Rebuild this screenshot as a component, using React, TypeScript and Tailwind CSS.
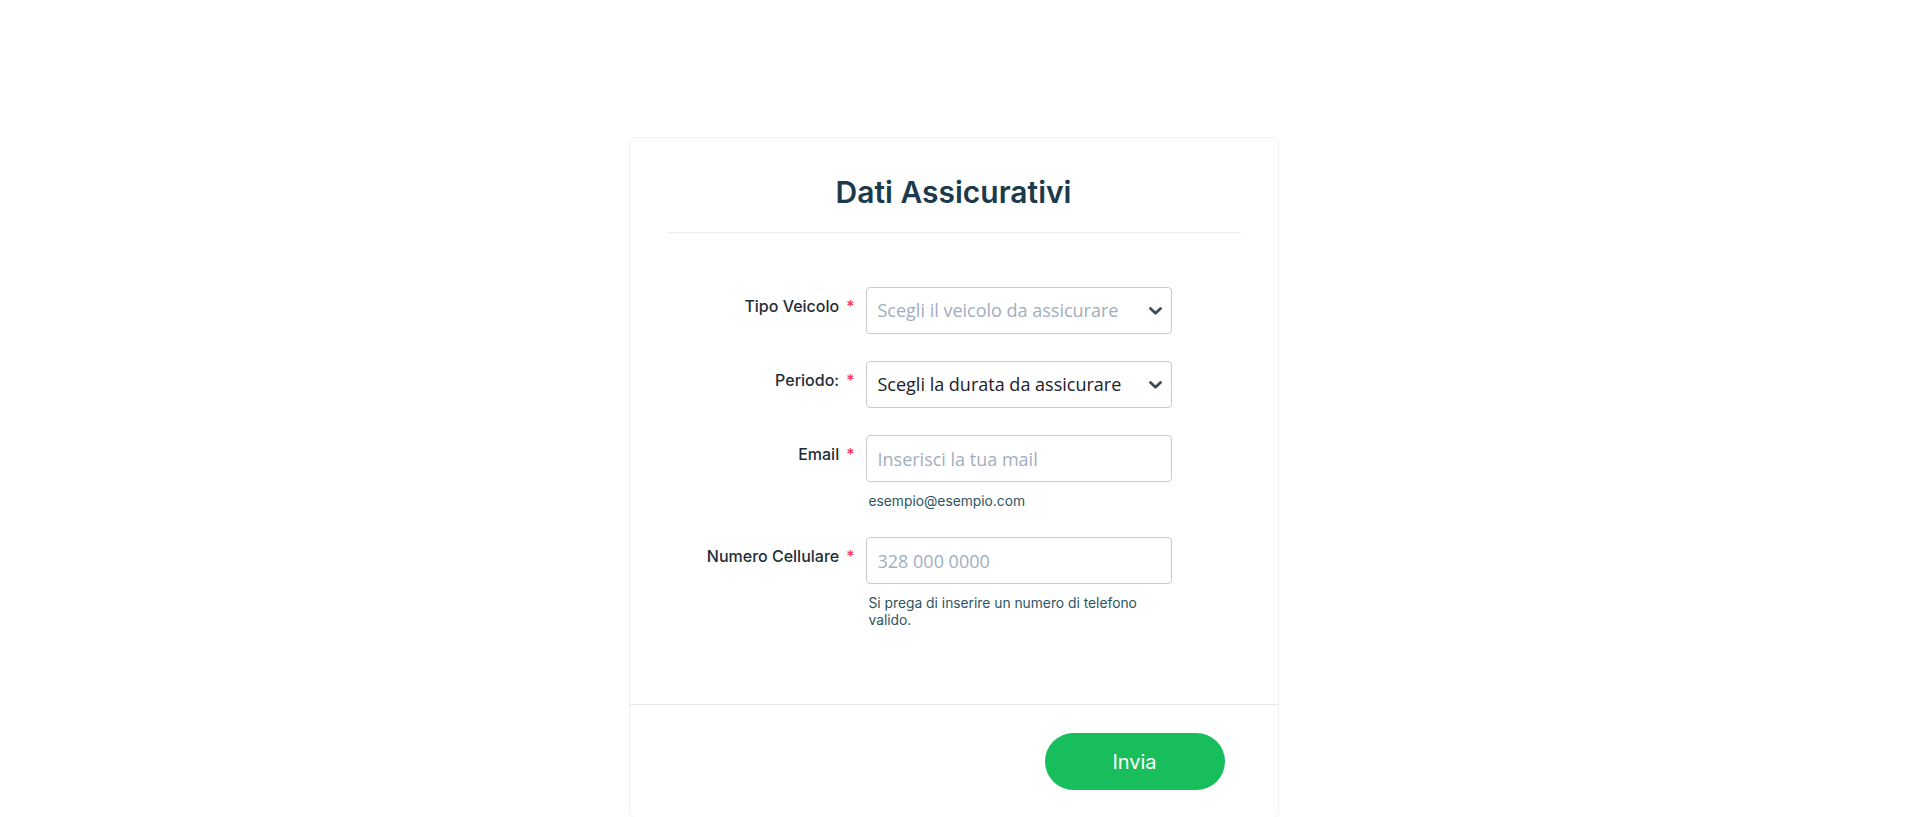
import type { ReactNode } from 'react'

const labelFont = { fontFamily: 'Inter, "Liberation Sans", sans-serif' }
const fieldFont = { fontFamily: '"Open Sans", "Noto Sans", sans-serif' }

function Chevron() {
  return (
    <svg
      width="13"
      height="8"
      viewBox="0 0 13 8"
      className="pointer-events-none absolute right-[10px] top-1/2 -translate-y-1/2"
    >
      <path
        d="M1.5 1.5 6.5 6.2l5-4.7"
        fill="none"
        stroke="#3f4a5c"
        strokeWidth="2.8"
        strokeLinecap="round"
        strokeLinejoin="round"
      />
    </svg>
  )
}

function Row({ label, children, hint }: { label: string; children: ReactNode; hint?: string }) {
  return (
    <div className="flex">
      <label
        className="w-[199px] pr-[11px] pt-[7px] text-right text-[16px] leading-6 font-medium text-[#1f2d38]"
        style={labelFont}
      >
        {label}
        <span className="ml-[7px] text-[#f0364f]">*</span>
      </label>
      <div className="w-[306px]">
        {children}
        {hint && (
          <p
            className="mt-[11px] pl-[3px] text-[13.8px] leading-[17px] text-[#2d5563]"
            style={labelFont}
          >
            {hint}
          </p>
        )}
      </div>
    </div>
  )
}

export default function App() {
  return (
    <div className="min-h-screen w-full bg-white pt-[137px]">
      <div className="mx-auto w-[650px] rounded-md border border-[#f0f0f3] bg-white">
        <div className="px-[37px] pt-[36px]">
          <h1
            className="border-b border-[#ececee] pb-[22px] text-center text-[30px] leading-[36px] font-semibold text-[#1b3b4d]"
            style={labelFont}
          >
            Dati Assicurativi
          </h1>

          <div className="flex flex-col gap-[27px] pt-[54px] pb-[75px]">
            <Row label="Tipo Veicolo">
              <div className="relative">
                <select
                  defaultValue=""
                  className="h-[47px] w-full appearance-none rounded-[4px] border border-[#c6cad6] bg-white pl-[11px] text-[18px] text-[#a0aec0] outline-none"
                  style={fieldFont}
                >
                  <option value="" disabled>
                    Scegli il veicolo da assicurare
                  </option>
                  <option value="auto">Auto</option>
                  <option value="moto">Moto</option>
                </select>
                <Chevron />
              </div>
            </Row>

            <Row label="Periodo:">
              <div className="relative">
                <select
                  defaultValue=""
                  className="h-[47px] w-full appearance-none rounded-[4px] border border-[#c6cad6] bg-white pl-[11px] text-[18px] text-[#1a202c] outline-none"
                  style={fieldFont}
                >
                  <option value="">Scegli la durata da assicurare</option>
                  <option value="1">1 mese</option>
                  <option value="12">12 mesi</option>
                </select>
                <Chevron />
              </div>
            </Row>

            <Row label="Email" hint="esempio@esempio.com">
              <input
                type="email"
                placeholder="Inserisci la tua mail"
                className="h-[47px] w-full rounded-[4px] border border-[#c6cad6] px-[11px] text-[18px] text-[#1a202c] outline-none placeholder:text-[#a0aec0]"
                style={fieldFont}
              />
            </Row>

            <Row label="Numero Cellulare" hint="Si prega di inserire un numero di telefono valido.">
              <input
                type="tel"
                placeholder="328 000 0000"
                className="h-[47px] w-full rounded-[4px] border border-[#c6cad6] px-[11px] text-[18px] text-[#1a202c] outline-none placeholder:text-[#a0aec0]"
                style={fieldFont}
              />
            </Row>
          </div>
        </div>

        <div className="flex justify-end border-t border-[#e6e6ee] pt-[28px] pr-[53px] pb-[27px]">
          <button
            className="h-[57px] w-[180px] rounded-full bg-[#18be5c] text-[20px] text-white"
            style={labelFont}
          >
            Invia
          </button>
        </div>
      </div>
    </div>
  )
}
